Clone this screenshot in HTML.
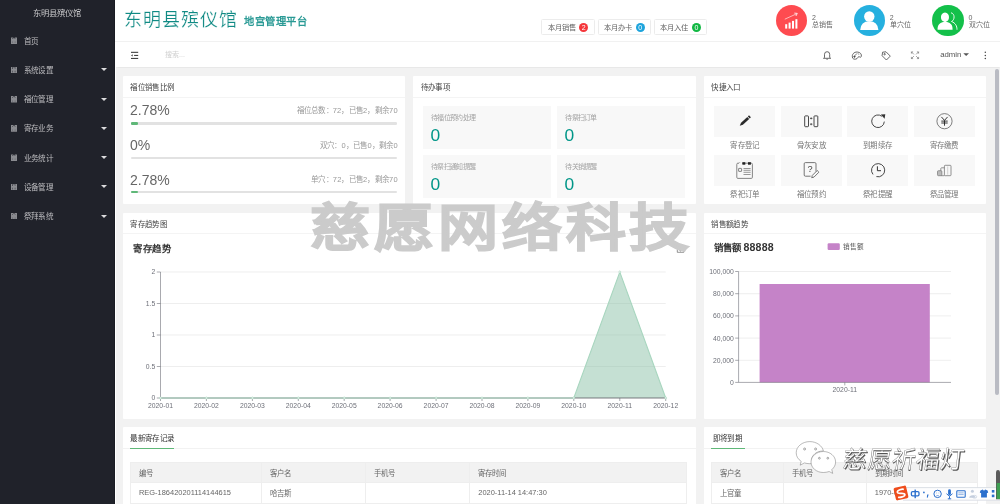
<!DOCTYPE html>
<html lang="zh-CN"><head><meta charset="utf-8"><style>
*{box-sizing:border-box;margin:0;padding:0}
html,body{width:1000px;height:504px;overflow:hidden;background:#f2f2f2;font-family:"Liberation Sans",sans-serif;color:#666}
i,b{font-style:normal;font-weight:normal}
#side{position:absolute;left:0;top:0;width:115px;height:504px;background:#20222a;border-right:1.7px solid #1a1c23}
#side .logo{position:absolute;left:0;top:7.5px;width:113px;height:10px;line-height:10px;text-align:center;color:#c9c9cb;font-size:8.3px;white-space:nowrap}
.mi{position:absolute;left:0;width:113px;height:0}
.mi .ic{position:absolute;left:10.8px;top:-3.4px;width:6.5px;height:6.7px;background:#8a8b90;clip-path:polygon(0 0,38% 0,50% 22%,62% 0,100% 0,100% 100%,0 100%)}
.mi .ic:after{content:"";position:absolute;left:1.3px;top:.8px;width:1.2px;height:1.2px;border-radius:50%;background:#4a4c52;box-shadow:2.6px 0 0 #5a5c62,0 3.4px 0 #5a5c62,2.6px 3.4px 0 #5a5c62}
.mi .tx{position:absolute;left:23.6px;top:-4.2px;font-size:7.6px;letter-spacing:-.55px;line-height:10px;color:#bdbdc0;white-space:nowrap}
.mi .ca{position:absolute;left:101px;top:-1.6px;width:0;height:0;border-left:3px solid transparent;border-right:3px solid transparent;border-top:3.4px solid #dcdcdd}
#hdr{position:absolute;left:115px;top:0;width:885px;height:42px;background:#fff;border-bottom:1px solid #f1f1f1;box-shadow:0 0 1px rgba(0,0,0,.04)}
#tb{position:absolute;left:115px;top:42px;width:885px;height:25px;background:#fff;box-shadow:0 .5px 1px rgba(0,0,0,.04)}
.card{position:absolute;background:#fff;border-radius:1px}
.ch{position:absolute;left:0;top:0;right:0;height:21.5px;border-bottom:1px solid #f4f4f4;font-size:7.5px;letter-spacing:.3px;line-height:23.5px;padding-left:7.6px;color:#444;white-space:nowrap}
.t{position:absolute;white-space:nowrap;line-height:1}
.btn{position:absolute;top:18.6px;height:16.8px;border:1px solid #ececec;border-radius:1.5px;background:#fff}
.btn span{position:absolute;left:5.5px;top:4.4px;font-size:7.3px;line-height:8px;color:#636363;white-space:nowrap}
.badge{position:absolute;top:3.5px;width:9.2px;height:9.2px;border-radius:50%;color:#fff;font-size:7px;line-height:9.2px;text-align:center}
.circ{position:absolute;top:5px;width:31.4px;height:31.4px;border-radius:50%}
.st{position:absolute;font-size:7px;line-height:7.5px;color:#666;white-space:nowrap}
.prog{position:absolute;left:130.5px;width:266.7px;height:2.6px;border-radius:1.3px;background:#e2e2e2}
.prog i{position:absolute;left:0;top:0;height:2.6px;border-radius:1.3px;background:#5fb878}
.todo{position:absolute;width:128px;height:43px;background:#f8f8f8}
.todo .l{position:absolute;left:8.1px;top:8px;font-size:7px;letter-spacing:-.7px;line-height:8px;color:#a3a3a3;white-space:nowrap}
.todo .n{position:absolute;left:7.4px;top:21px;font-size:17.4px;line-height:16px;color:#009688}
.qk{position:absolute;width:61px;height:31px;background:#f8f8f8}
.ql{position:absolute;width:61px;text-align:center;font-size:7.5px;letter-spacing:.3px;text-indent:.3px;line-height:8px;color:#777;white-space:nowrap}
table{border-collapse:collapse;position:absolute;table-layout:fixed}
td{border:1px solid #eeeeee;font-size:7.45px;color:#666;padding-left:8px;white-space:nowrap;overflow:hidden}
tr.h td{background:#f2f2f2;height:19.9px}
tr.r td{height:21px}
</style></head><body><div id="root" style="position:absolute;left:0;top:0;width:1000px;height:504px;overflow:hidden;will-change:transform">
<div id="side"><div class="logo">东明县殡仪馆</div>
<div class="mi" style="top:40.8px"><i class="ic"></i><span class="tx">首页</span></div>
<div class="mi" style="top:70.0px"><i class="ic"></i><span class="tx">系统设置</span><i class="ca"></i></div>
<div class="mi" style="top:99.3px"><i class="ic"></i><span class="tx">福位管理</span><i class="ca"></i></div>
<div class="mi" style="top:128.5px"><i class="ic"></i><span class="tx">寄存业务</span><i class="ca"></i></div>
<div class="mi" style="top:157.8px"><i class="ic"></i><span class="tx">业务统计</span><i class="ca"></i></div>
<div class="mi" style="top:187.0px"><i class="ic"></i><span class="tx">设备管理</span><i class="ca"></i></div>
<div class="mi" style="top:216.2px"><i class="ic"></i><span class="tx">祭拜系统</span><i class="ca"></i></div>
</div>
<div id="hdr"></div>
<div class="t" style="left:124px;top:10.6px;font-size:18px;letter-spacing:1.1px;color:#108a84;-webkit-text-stroke:.22px #fff">东明县殡仪馆</div>
<div class="t" style="left:244px;top:17.4px;font-size:10.3px;letter-spacing:.5px;font-weight:bold;color:#2a9a95">地宫管理平台</div>
<div class="btn" style="left:541.1px;width:53.6px"><span>本月销售</span><i class="badge" style="left:37px;background:#f5363b">2</i></div>
<div class="btn" style="left:597.5px;width:53.6px"><span>本月办卡</span><i class="badge" style="left:37px;background:#1ea4dc">0</i></div>
<div class="btn" style="left:653.9px;width:53.6px"><span>本月入住</span><i class="badge" style="left:37px;background:#12b843">0</i></div>
<div class="circ" style="left:775.8px;background:#fe4b50"></div>
<div class="st" style="left:812.0px;top:13.5px">2</div><div class="st" style="left:812.0px;top:21.3px">总销售</div>
<div class="circ" style="left:853.6px;background:#26b0df"></div>
<div class="st" style="left:889.8000000000001px;top:13.5px">2</div><div class="st" style="left:889.8000000000001px;top:21.3px">单穴位</div>
<div class="circ" style="left:932.4px;background:#13c04a"></div>
<div class="st" style="left:968.6px;top:13.5px">0</div><div class="st" style="left:968.6px;top:21.3px">双穴位</div>
<svg class="t" style="left:0;top:0" width="1000" height="42" viewBox="0 0 1000 42">
<g fill="#fff"><rect x="785.2" y="24.2" width="2" height="4.4"/><rect x="788.6" y="22.6" width="2" height="6"/><rect x="792" y="20.9" width="2" height="7.7"/><rect x="795.4" y="19.2" width="2" height="9.4"/></g>
<path d="M784.8 19.2 L796.6 13.8" stroke="#fff" stroke-width="0.6" fill="none"/><path d="M794.3 13.1 L797.3 13.4 L795.9 16" stroke="#fff" stroke-width="0.8" fill="none"/>
<circle cx="869.3" cy="16.5" r="5.2" fill="#fff"/><path d="M860.2 30 Q860.8 21.2 869.3 21.2 Q877.8 21.2 878.4 30 Z" fill="#fff"/>
<path d="M944.6 21.8 C939.6 21.4 939.8 12.5 945 12.5 C950.2 12.5 950.3 21.4 945.6 21.8 C952.5 22.6 952.6 27.2 952.6 29.7 L937.6 29.7 C937.6 27.2 937.8 22.6 944.6 21.8 Z" fill="#fff"/>
<path d="M951 12.8 C955 13.5 955 20 951.5 21.5 C955.5 23 957 26 957 29.7" stroke="#fff" stroke-width="0.9" fill="none"/>
</svg>
<div id="tb"></div>
<svg class="t" style="left:0;top:42px" width="1000" height="25" viewBox="0 42 1000 25">
<g fill="#3a3a3a"><rect x="131" y="51.8" width="7.2" height="1.05"/><rect x="134.1" y="54.9" width="4.1" height="1.05"/><rect x="131" y="57.9" width="7.2" height="1.05"/><path d="M131 55.4 L132.7 54.2 L132.7 56.6Z"/></g>
<g stroke="#444" fill="none" stroke-width="0.8">
<path d="M824.5 57.5 L824.5 54.3 A2.6 2.6 0 0 1 829.7 54.3 L829.7 57.5 L830.7 58.3 L823.5 58.3 Z"/><path d="M826.5 59.3 L827.7 59.3"/>
<path d="M852.7 58.2 C851.3 54.6 853.9 51.9 857.2 52 C860.3 52.1 861.9 54.4 861.3 56.4 C861 57.3 860.3 57.4 859.8 57 C859 56.4 858 56.7 857.8 57.6 C857.5 59.2 853.6 60 852.7 58.2 Z"/><circle cx="854.5" cy="56.6" r=".7" fill="#444"/><path d="M855.2 55.6 L856.6 53.6 M858 53.4 L858.8 54.6" stroke-width=".7"/>
<path d="M882.6 52.2 L886 51.8 L890.3 56.1 L886.4 60 L882.1 55.7 Z"/><circle cx="884.6" cy="54.2" r=".7"/>
<path stroke="#777" stroke-width=".7" d="M911.4 51.9 L913.9 54.4 M911.4 51.9 L911.4 53.6 M911.4 51.9 L913.1 51.9 M918.6 51.9 L916.1 54.4 M918.6 51.9 L918.6 53.6 M918.6 51.9 L916.9 51.9 M911.4 58.6 L913.9 56.1 M911.4 58.6 L911.4 56.9 M911.4 58.6 L913.1 58.6 M918.6 58.6 L916.1 56.1 M918.6 58.6 L918.6 56.9 M918.6 58.6 L916.9 58.6"/>
</g>
<path d="M963.3 53.2 L969 53.2 L966.15 56.1 Z" fill="#555"/>
<g fill="#444"><circle cx="985.3" cy="52.2" r=".75"/><circle cx="985.3" cy="55.4" r=".75"/><circle cx="985.3" cy="58.6" r=".75"/></g>
</svg>
<div class="t" style="left:165px;top:51.3px;font-size:7px;color:#cfcfcf">搜索...</div>
<div class="t" style="left:940.2px;top:51px;font-size:7.8px;color:#555">admin</div>
<div style="position:absolute;left:115px;top:67px;width:1px;height:437px;background:#fff"></div>
<div class="card" style="left:122.8px;top:76.2px;width:282.2px;height:127.6px"><div class="ch">福位销售比例</div></div>
<div class="t" style="left:130px;top:103.2px;font-size:14px;color:#666">2.78%</div>
<div class="t" style="right:602.2px;top:106.89999999999999px;font-size:7.5px;letter-spacing:.2px;color:#999">福位总数：72，已售2，剩余70</div>
<div class="t" style="left:130px;top:137.9px;font-size:14px;color:#666">0%</div>
<div class="t" style="right:602.2px;top:141.6px;font-size:7.5px;letter-spacing:.2px;color:#999">双穴：0，已售0，剩余0</div>
<div class="t" style="left:130px;top:172.5px;font-size:14px;color:#666">2.78%</div>
<div class="t" style="right:602.2px;top:176.2px;font-size:7.5px;letter-spacing:.2px;color:#999">单穴：72，已售2，剩余70</div>
<div class="prog" style="top:122px"><i style="width:7.41426px"></i></div>
<div class="prog" style="top:156.6px"></div>
<div class="prog" style="top:190.7px"><i style="width:7.41426px"></i></div>
<div class="card" style="left:413.2px;top:76.2px;width:282.6px;height:127.6px"><div class="ch">待办事项</div></div>
<div class="todo" style="left:423.1px;top:105.9px"><span class="l">待福位预约处理</span><span class="n">0</span></div>
<div class="todo" style="left:557.2px;top:105.9px"><span class="l">待祭扫订单</span><span class="n">0</span></div>
<div class="todo" style="left:423.1px;top:154.5px"><span class="l">待祭扫通知提醒</span><span class="n">0</span></div>
<div class="todo" style="left:557.2px;top:154.5px"><span class="l">待关销提醒</span><span class="n">0</span></div>
<div class="card" style="left:703.8px;top:76.2px;width:282px;height:127.6px"><div class="ch">快捷入口</div></div>
<div class="qk" style="left:714.2px;top:105.9px"></div><div class="ql" style="left:714.2px;top:142px">寄存登记</div>
<div class="qk" style="left:714.2px;top:155px"></div><div class="ql" style="left:714.2px;top:190.6px">祭祀订单</div>
<div class="qk" style="left:780.6px;top:105.9px"></div><div class="ql" style="left:780.6px;top:142px">骨灰安放</div>
<div class="qk" style="left:780.6px;top:155px"></div><div class="ql" style="left:780.6px;top:190.6px">福位预约</div>
<div class="qk" style="left:847.0px;top:105.9px"></div><div class="ql" style="left:847.0px;top:142px">到期续存</div>
<div class="qk" style="left:847.0px;top:155px"></div><div class="ql" style="left:847.0px;top:190.6px">祭祀提醒</div>
<div class="qk" style="left:913.5px;top:105.9px"></div><div class="ql" style="left:913.5px;top:142px">寄存缴费</div>
<div class="qk" style="left:913.5px;top:155px"></div><div class="ql" style="left:913.5px;top:190.6px">祭品管理</div>
<svg class="t" style="left:0;top:0" width="1000" height="210" viewBox="0 0 1000 210">
<g transform="translate(744.6 121.3) rotate(-43)" fill="#2b2b2b"><path d="M-3.6 -1.35 L5 -1.35 L5 1.35 L-3.6 1.35 L-6.6 0 Z"/><rect x="5.7" y="-1.35" width="1.6" height="2.7"/></g>
<g stroke="#333" stroke-width="0.9" fill="none">
<rect x="804.7" y="115.9" width="3.8" height="10.8" rx=".7"/><rect x="814" y="115.9" width="3.8" height="10.8" rx=".7"/>
<path d="M884.3 121.6 A6.3 6.3 0 1 1 881.9 116.3"/>
</g>
<path d="M880.8 114.6 L885.3 114.3 L884.6 118.8 Z" fill="#333"/>
<g stroke="#333" stroke-width="0.8" fill="none"><path d="M810 118.4 L812.4 118.4 M810 124.2 L812.4 124.2"/><path d="M811.2 117.3 L811.2 119.4 M811.2 123.1 L811.2 125.3" stroke-width=".6"/></g>
<circle cx="944.5" cy="121.2" r="7.6" stroke="#555" stroke-width="0.75" fill="none"/>
<g stroke="#222" stroke-width="0.9" fill="none"><path d="M941.4 116.9 L944.5 120.4 L947.6 116.9 M944.5 120.4 L944.5 125.7 M941.3 121.1 L947.7 121.1 M941.3 123 L947.7 123"/></g>
<g stroke="#777" stroke-width="0.9" fill="none">
<path d="M742 163.2 L751.3 163.2 Q752.4 163.2 752.4 164.3 L752.4 177.3 Q752.4 178.4 751.3 178.4 L737.9 178.4 Q736.8 178.4 736.8 177.3 L736.8 164.3 Q736.8 163.2 737.9 163.2 L739 163.2 L739.8 162.4"/>
<rect x="738.6" y="168.4" width="3" height="3" rx=".3"/>
<path d="M743.5 168.5 L750.6 168.5 M743.5 170.3 L750.6 170.3 M743.5 172.3 L750.6 172.3 M743.5 174.5 L750.6 174.5" stroke-width=".75"/>
</g>
<g fill="#222"><rect x="742.4" y="162.2" width="2.9" height="2.5"/><rect x="748" y="162.2" width="2.9" height="2.5"/></g>
<g stroke="#666" stroke-width="0.9" fill="none">
<path d="M816 171.5 L816 163.8 Q816 162.6 814.8 162.6 L805.4 162.6 Q804.2 162.6 804.2 163.8 L804.2 175 Q804.2 176.2 805.4 176.2 L810.6 176.2"/>
<path d="M811.7 177.7 L812.3 175.4 L817.2 170.5 L818.9 172.2 L814 177.1 Z"/>
</g>
<text x="810.1" y="172.4" font-size="9.2" fill="#444" text-anchor="middle" font-family="Liberation Sans">?</text>
<g stroke="#333" stroke-width="0.9" fill="none">
<path d="M873 174.4 A6.6 6.6 0 1 1 876.4 176.6"/>
<path d="M877.4 166.3 L877.4 170.7 L881 170.7" stroke-width="1"/>
</g>
<g stroke="#777" stroke-width="0.8" fill="none">
<rect x="944.4" y="165.3" width="6.6" height="10.4" rx=".8"/>
<path d="M944.4 175.7 L941.6 175.7 Q940.8 175.7 940.8 174.9 L940.8 168.6 Q940.8 167.8 941.6 167.8 L944.4 167.8"/>
<path d="M947.7 166.5 L947.7 174.6" stroke="#aaa" stroke-width=".5"/>
</g>
<rect x="937.5" y="170.7" width="4.4" height="5" rx=".9" fill="#bbb" stroke="#777" stroke-width=".7"/>
</svg>
<div class="card" style="left:122.8px;top:212.7px;width:573px;height:206px"><div class="ch">寄存趋势图</div></div>
<div class="card" style="left:703.8px;top:212.7px;width:282px;height:206px"><div class="ch">销售额趋势</div></div>
<div class="t" style="left:133px;top:243.5px;font-size:9.4px;letter-spacing:.5px;font-weight:bold;color:#333">寄存趋势</div>
<div class="t" style="left:713.8px;top:241.9px;font-size:9.4px;font-weight:bold;color:#333">销售额 <span style="font-size:10.6px;letter-spacing:.2px">88888</span></div>
<svg class="t" style="left:0;top:0" width="1000" height="420" viewBox="0 0 1000 420"><line x1="160.5" y1="272" x2="665.7" y2="272" stroke="#e3e3e3" stroke-width="0.6"/><line x1="156.8" y1="272" x2="160.5" y2="272" stroke="#6e7079" stroke-width="0.6"/><text x="155.2" y="274.4" font-size="6.8" fill="#6e7079" text-anchor="end" font-family="Liberation Sans">2</text><line x1="160.5" y1="303.5" x2="665.7" y2="303.5" stroke="#e3e3e3" stroke-width="0.6"/><line x1="156.8" y1="303.5" x2="160.5" y2="303.5" stroke="#6e7079" stroke-width="0.6"/><text x="155.2" y="305.9" font-size="6.8" fill="#6e7079" text-anchor="end" font-family="Liberation Sans">1.5</text><line x1="160.5" y1="335" x2="665.7" y2="335" stroke="#e3e3e3" stroke-width="0.6"/><line x1="156.8" y1="335" x2="160.5" y2="335" stroke="#6e7079" stroke-width="0.6"/><text x="155.2" y="337.4" font-size="6.8" fill="#6e7079" text-anchor="end" font-family="Liberation Sans">1</text><line x1="160.5" y1="366.5" x2="665.7" y2="366.5" stroke="#e3e3e3" stroke-width="0.6"/><line x1="156.8" y1="366.5" x2="160.5" y2="366.5" stroke="#6e7079" stroke-width="0.6"/><text x="155.2" y="368.9" font-size="6.8" fill="#6e7079" text-anchor="end" font-family="Liberation Sans">0.5</text><line x1="156.8" y1="398" x2="160.5" y2="398" stroke="#6e7079" stroke-width="0.6"/><text x="155.2" y="400.4" font-size="6.8" fill="#6e7079" text-anchor="end" font-family="Liberation Sans">0</text><line x1="160.5" y1="272" x2="160.5" y2="398" stroke="#6e7079" stroke-width="0.6"/><line x1="160.5" y1="398" x2="160.5" y2="401" stroke="#6e7079" stroke-width="0.6"/><text x="160.5" y="408.2" font-size="6.8" fill="#6e7079" text-anchor="middle" font-family="Liberation Sans">2020-01</text><line x1="206.4" y1="398" x2="206.4" y2="401" stroke="#6e7079" stroke-width="0.6"/><text x="206.4" y="408.2" font-size="6.8" fill="#6e7079" text-anchor="middle" font-family="Liberation Sans">2020-02</text><line x1="252.4" y1="398" x2="252.4" y2="401" stroke="#6e7079" stroke-width="0.6"/><text x="252.4" y="408.2" font-size="6.8" fill="#6e7079" text-anchor="middle" font-family="Liberation Sans">2020-03</text><line x1="298.3" y1="398" x2="298.3" y2="401" stroke="#6e7079" stroke-width="0.6"/><text x="298.3" y="408.2" font-size="6.8" fill="#6e7079" text-anchor="middle" font-family="Liberation Sans">2020-04</text><line x1="344.2" y1="398" x2="344.2" y2="401" stroke="#6e7079" stroke-width="0.6"/><text x="344.2" y="408.2" font-size="6.8" fill="#6e7079" text-anchor="middle" font-family="Liberation Sans">2020-05</text><line x1="390.1" y1="398" x2="390.1" y2="401" stroke="#6e7079" stroke-width="0.6"/><text x="390.1" y="408.2" font-size="6.8" fill="#6e7079" text-anchor="middle" font-family="Liberation Sans">2020-06</text><line x1="436.1" y1="398" x2="436.1" y2="401" stroke="#6e7079" stroke-width="0.6"/><text x="436.1" y="408.2" font-size="6.8" fill="#6e7079" text-anchor="middle" font-family="Liberation Sans">2020-07</text><line x1="482.0" y1="398" x2="482.0" y2="401" stroke="#6e7079" stroke-width="0.6"/><text x="482.0" y="408.2" font-size="6.8" fill="#6e7079" text-anchor="middle" font-family="Liberation Sans">2020-08</text><line x1="527.9" y1="398" x2="527.9" y2="401" stroke="#6e7079" stroke-width="0.6"/><text x="527.9" y="408.2" font-size="6.8" fill="#6e7079" text-anchor="middle" font-family="Liberation Sans">2020-09</text><line x1="573.8" y1="398" x2="573.8" y2="401" stroke="#6e7079" stroke-width="0.6"/><text x="573.8" y="408.2" font-size="6.8" fill="#6e7079" text-anchor="middle" font-family="Liberation Sans">2020-10</text><line x1="619.8" y1="398" x2="619.8" y2="401" stroke="#6e7079" stroke-width="0.6"/><text x="619.8" y="408.2" font-size="6.8" fill="#6e7079" text-anchor="middle" font-family="Liberation Sans">2020-11</text><line x1="665.7" y1="398" x2="665.7" y2="401" stroke="#6e7079" stroke-width="0.6"/><text x="665.7" y="408.2" font-size="6.8" fill="#6e7079" text-anchor="middle" font-family="Liberation Sans">2020-12</text><path d="M573.8 398 L619.8 272 L665.7 398 Z" fill="#8bc2a7" fill-opacity=".5"/><line x1="160.5" y1="398" x2="665.7" y2="398" stroke="#5a5c63" stroke-width="0.8"/><path d="M160.5 398 L573.8 398 L619.8 272 L665.7 398" fill="none" stroke="#a8d6bf" stroke-width="1.1"/><circle cx="160.5" cy="398" r="1" fill="#fff" stroke="#a3d3ba" stroke-width="0.6"/><circle cx="206.4" cy="398" r="1" fill="#fff" stroke="#a3d3ba" stroke-width="0.6"/><circle cx="252.4" cy="398" r="1" fill="#fff" stroke="#a3d3ba" stroke-width="0.6"/><circle cx="298.3" cy="398" r="1" fill="#fff" stroke="#a3d3ba" stroke-width="0.6"/><circle cx="344.2" cy="398" r="1" fill="#fff" stroke="#a3d3ba" stroke-width="0.6"/><circle cx="390.1" cy="398" r="1" fill="#fff" stroke="#a3d3ba" stroke-width="0.6"/><circle cx="436.1" cy="398" r="1" fill="#fff" stroke="#a3d3ba" stroke-width="0.6"/><circle cx="482.0" cy="398" r="1" fill="#fff" stroke="#a3d3ba" stroke-width="0.6"/><circle cx="527.9" cy="398" r="1" fill="#fff" stroke="#a3d3ba" stroke-width="0.6"/><circle cx="573.8" cy="398" r="1" fill="#fff" stroke="#a3d3ba" stroke-width="0.6"/><circle cx="619.8" cy="272" r="1" fill="#fff" stroke="#a3d3ba" stroke-width="0.6"/><circle cx="665.7" cy="398" r="1" fill="#fff" stroke="#a3d3ba" stroke-width="0.6"/><line x1="738.6" y1="271.5" x2="951" y2="271.5" stroke="#e3e3e3" stroke-width="0.6"/><line x1="735.2" y1="271.5" x2="738.6" y2="271.5" stroke="#6e7079" stroke-width="0.6"/><text x="733.8" y="273.9" font-size="6.8" fill="#6e7079" text-anchor="end" font-family="Liberation Sans">100,000</text><line x1="738.6" y1="293.7" x2="951" y2="293.7" stroke="#e3e3e3" stroke-width="0.6"/><line x1="735.2" y1="293.7" x2="738.6" y2="293.7" stroke="#6e7079" stroke-width="0.6"/><text x="733.8" y="296.09999999999997" font-size="6.8" fill="#6e7079" text-anchor="end" font-family="Liberation Sans">80,000</text><line x1="738.6" y1="315.9" x2="951" y2="315.9" stroke="#e3e3e3" stroke-width="0.6"/><line x1="735.2" y1="315.9" x2="738.6" y2="315.9" stroke="#6e7079" stroke-width="0.6"/><text x="733.8" y="318.29999999999995" font-size="6.8" fill="#6e7079" text-anchor="end" font-family="Liberation Sans">60,000</text><line x1="738.6" y1="338.1" x2="951" y2="338.1" stroke="#e3e3e3" stroke-width="0.6"/><line x1="735.2" y1="338.1" x2="738.6" y2="338.1" stroke="#6e7079" stroke-width="0.6"/><text x="733.8" y="340.5" font-size="6.8" fill="#6e7079" text-anchor="end" font-family="Liberation Sans">40,000</text><line x1="738.6" y1="360.3" x2="951" y2="360.3" stroke="#e3e3e3" stroke-width="0.6"/><line x1="735.2" y1="360.3" x2="738.6" y2="360.3" stroke="#6e7079" stroke-width="0.6"/><text x="733.8" y="362.7" font-size="6.8" fill="#6e7079" text-anchor="end" font-family="Liberation Sans">20,000</text><line x1="735.2" y1="382.4" x2="738.6" y2="382.4" stroke="#6e7079" stroke-width="0.6"/><text x="733.8" y="384.79999999999995" font-size="6.8" fill="#6e7079" text-anchor="end" font-family="Liberation Sans">0</text><rect x="759.6" y="284" width="170.2" height="98.4" fill="#c583c8"/><line x1="738.6" y1="271.5" x2="738.6" y2="382.4" stroke="#6e7079" stroke-width="0.6"/><line x1="738.6" y1="382.4" x2="951" y2="382.4" stroke="#6e7079" stroke-width="0.6"/><line x1="844.8" y1="382.4" x2="844.8" y2="385.4" stroke="#6e7079" stroke-width="0.6"/><text x="844.8" y="392.4" font-size="6.8" fill="#6e7079" text-anchor="middle" font-family="Liberation Sans">2020-11</text><rect x="827.6" y="243.2" width="12.2" height="6.8" rx="1.2" fill="#c583c8"/><path d="M677.3 249.2 L677.3 252.3 L683.8 252.3 L683.8 249.2 M680.5 246.5 L680.5 251 M678.9 249.5 L680.5 251 L682.1 249.5" stroke="#666" stroke-width=".7" fill="none"/></svg>
<div class="t" style="left:842.8px;top:244.2px;font-size:6.6px;letter-spacing:-.1px;color:#555">销售额</div>
<div class="card" style="left:122.8px;top:427px;width:573px;height:90px"><div class="ch" style="border-bottom-color:#f2f2f2;height:22.3px"></div></div>
<div class="t" style="left:130.4px;top:434.5px;font-size:7.5px;letter-spacing:.35px;color:#333">最新寄存记录</div>
<div style="position:absolute;left:130.4px;top:448px;width:43.7px;height:1.1px;background:#5fb878"></div>
<div class="card" style="left:703.8px;top:427px;width:282px;height:90px"><div class="ch" style="border-bottom-color:#f2f2f2;height:22.3px"></div></div>
<div class="t" style="left:712.5px;top:434.5px;font-size:7.5px;letter-spacing:.35px;color:#333">即将到期</div>
<div style="position:absolute;left:711.2px;top:448px;width:34px;height:1.1px;background:#5fb878"></div>
<table style="left:130px;top:461.7px;width:557.4px">
<colgroup><col style="width:130.9px"><col style="width:103.8px"><col style="width:104.6px"><col></colgroup>
<tr class="h"><td>编号</td><td>客户名</td><td>手机号</td><td>寄存时间</td></tr>
<tr class="r"><td>REG-186420201114144615</td><td>哈吉斯</td><td></td><td>2020-11-14 14:47:30</td></tr>
</table>
<table style="left:710.9px;top:461.7px;width:266.8px">
<colgroup><col style="width:72.1px"><col style="width:82.8px"><col></colgroup>
<tr class="h"><td>客户名</td><td>手机号</td><td>到期时间</td></tr>
<tr class="r"><td>上官童</td><td></td><td>1970-01-01</td></tr>
</table>
<div style="position:absolute;left:994.8px;top:69px;width:4.4px;height:326px;border-radius:2.2px;background:#b9bbc3"></div>
<div class="t" style="left:310px;top:202.9px;font-size:60px;font-weight:bold;color:#cbcbcb;-webkit-text-stroke:1.6px #cbcbcb;letter-spacing:3.9px;transform:scaleY(0.85);transform-origin:0 0">慈愿网络科技</div>
<svg class="t" style="left:790px;top:436px" width="56" height="45" viewBox="790 436 56 45">
<g fill="#fff" stroke="#666" stroke-width="0.45">
<path d="M809.8 441.6 C802.2 441.6 796.2 446.6 796.2 452.8 C796.2 456.4 798.2 459.4 801.2 461.4 L800.2 465.2 L804.4 462.9 C806 463.4 807.9 463.7 809.8 463.7 C810.6 463.7 811.4 463.7 812.1 463.6 C811.7 462.6 811.5 461.6 811.5 460.5 C811.5 455.2 816.6 451 823 451 L823.4 451 C822.3 445.8 816.6 441.6 809.8 441.6 Z"/>
<path d="M823.3 451.5 C830.1 451.5 835.6 456.2 835.6 462 C835.6 465 834.1 467.7 831.8 469.6 L832.7 473.4 L829.2 471.5 C827.4 472.1 825.4 472.5 823.3 472.5 C816.5 472.5 811 467.8 811 462 C811 456.2 816.5 451.5 823.3 451.5 Z"/>
</g>
<g fill="#fff" stroke="#555" stroke-width="0.5"><circle cx="804.6" cy="449" r="1"/><circle cx="815.6" cy="449" r="1"/><circle cx="819.4" cy="458.2" r=".9"/><circle cx="827.8" cy="458.2" r=".9"/></g>
</svg>
<div class="t" style="left:842px;top:448.2px;font-size:24px;color:#fff;transform:skewX(-7deg);transform-origin:0 100%;-webkit-text-stroke:.3px #5a5a5a;text-shadow:.6px .6px 0 #555;letter-spacing:.2px">慈愿祈福灯</div>
<svg class="t" style="left:880px;top:465px" width="120" height="39" viewBox="880 465 120 39">
<rect x="903" y="487.6" width="97" height="12.6" fill="#fdfdfe"/>
<path d="M903 487.6 L1000 487.6 M903 500.2 L1000 500.2" stroke="#d8dce3" stroke-width=".9"/>
<g transform="rotate(-13 901 493)"><rect x="894.6" y="486.6" width="12.8" height="12.8" rx="1.6" fill="#ef4d1c"/>
<path d="M904.6 490.2 C903.4 489.2 897.6 489.2 897.6 491.6 C897.6 494 904.4 492.6 904.4 495.3 C904.4 497.6 898.6 497.4 897.3 496.4" stroke="#fff" stroke-width="1.7" fill="none"/></g>
<g fill="#2b6fcd" stroke="none">
<rect x="914.5" y="489.6" width="1.4" height="8.6"/>
<rect x="911.4" y="491.6" width="7.6" height="4.2" rx="1.2" fill="none" stroke="#2b6fcd" stroke-width="1.3"/>
<circle cx="923.9" cy="492.4" r=".85"/><path d="M927.2 494.6 L928.6 494.6 L927.7 497.8 L926.8 497.6 Z"/>
</g>
<circle cx="937.6" cy="493.9" r="3.7" fill="none" stroke="#2b6fcd" stroke-width="1"/>
<path d="M936 493 L936.6 493 M938.6 493 L939.2 493 M936.4 495.6 L938.8 495.6" stroke="#2b6fcd" stroke-width=".6"/>
<g fill="#2b6fcd"><rect x="948.1" y="489.3" width="2.8" height="5.8" rx="1.4"/>
<path d="M946.6 493.6 Q949.5 498 952.4 493.6 M949.5 496.2 L949.5 498.6 M947.8 498.8 L951.2 498.8" stroke="#2b6fcd" stroke-width="1" fill="none"/>
<rect x="956.8" y="490.8" width="8.4" height="6.4" rx=".8" fill="none" stroke="#2b6fcd" stroke-width="1.1"/>
<path d="M958.3 492.9 L963.7 492.9 M958.3 494.6 L963.7 494.6" stroke="#2b6fcd" stroke-width=".5"/>
<path d="M980.4 490.6 L982.8 489.6 L984 490.7 L985.2 489.6 L987.6 490.6 L988.2 492.8 L986.9 493 L986.9 497.6 L981.1 497.6 L981.1 493 L979.8 492.8 Z"/>
<rect x="991.8" y="490" width="2.6" height="2.6"/><rect x="991.8" y="494.6" width="2.6" height="2.6"/>
</g>
<g fill="#c4cede"><circle cx="972.4" cy="491.2" r="1.5"/><path d="M969.2 497.8 C969.2 494.4 975.6 494.4 975.6 497.8 Z"/><ellipse cx="974.6" cy="496.8" rx="2.2" ry="1.4" fill="none" stroke="#c4cede" stroke-width=".7"/></g>
<path d="M996 472.3 Q996 470 998 470 Q1000 470 1000 472.3 L1000 499.3 L996 499.3 Z" fill="#5a5a5a"/>
<rect x="996.7" y="483" width="3.3" height="16" fill="#3e9f52"/>
</svg>
</div></body></html>
